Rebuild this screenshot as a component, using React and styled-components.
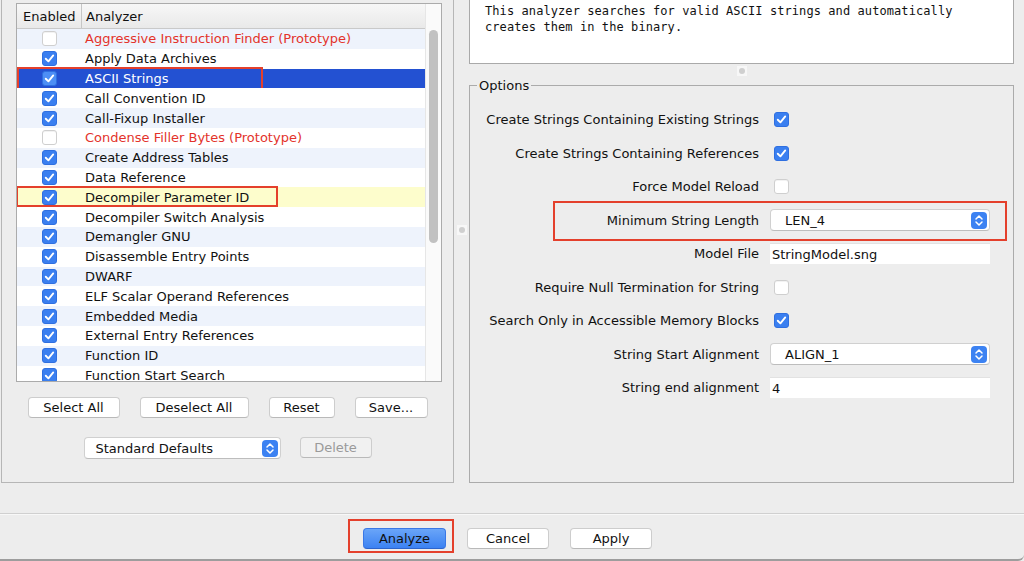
import React from 'react';
import styled, { createGlobalStyle } from 'styled-components';

const GlobalStyle = createGlobalStyle`
  html, body {
    margin: 0;
    padding: 0;
    background: #ededed;
  }
  body {
    font-family: "DejaVu Sans", "Liberation Sans", sans-serif;
    font-size: 13px;
    color: #111;
  }
`;

const analyzers = [
    { name: 'Aggressive Instruction Finder (Prototype)', on: false, proto: true },
    { name: 'Apply Data Archives', on: true },
    { name: 'ASCII Strings', on: true },
    { name: 'Call Convention ID', on: true },
    { name: 'Call-Fixup Installer', on: true },
    { name: 'Condense Filler Bytes (Prototype)', on: false, proto: true },
    { name: 'Create Address Tables', on: true },
    { name: 'Data Reference', on: true },
    { name: 'Decompiler Parameter ID', on: true },
    { name: 'Decompiler Switch Analysis', on: true },
    { name: 'Demangler GNU', on: true },
    { name: 'Disassemble Entry Points', on: true },
    { name: 'DWARF', on: true },
    { name: 'ELF Scalar Operand References', on: true },
    { name: 'Embedded Media', on: true },
    { name: 'External Entry References', on: true },
    { name: 'Function ID', on: true },
    { name: 'Function Start Search', on: true },
];

const SELECTED = 2;
const HOVERED = 8;

const Window = styled.div`
    width: 1024px;
    height: 561px;
    box-sizing: border-box;
    display: flex;
    flex-direction: column;
    background: #ededed;
    overflow: hidden;
    border-bottom: 2px solid #9d9d9d;
    border-bottom-right-radius: 6px;
`;

const Main = styled.div`
    display: flex;
    height: 514px;
    box-sizing: border-box;
    border-bottom: 1px solid #d0d0d0;
`;

const LeftPanel = styled.div`
    margin-left: 1px;
    width: 453px;
    height: 483px;
    box-sizing: border-box;
    padding-top: 3px;
    border: 1px solid #b6b6b6;
    border-top: none;
    display: flex;
    flex-direction: column;
`;

const ScrollPane = styled.div`
    margin-left: 14px;
    width: 426px;
    height: 379px;
    box-sizing: border-box;
    border: 1px solid #ababab;
    background: #fff;
    display: flex;
    overflow: hidden;
`;

const TableArea = styled.div`
    flex: 1;
    display: flex;
    flex-direction: column;
`;

const HeaderRow = styled.div`
    display: flex;
    height: 25px;
    flex-shrink: 0;
    align-items: center;
    background: linear-gradient(#f7f7f7, #e9e9e9);
    border-bottom: 1px solid #c9c9c9;
    box-sizing: border-box;
`;

const HeaderCell = styled.div`
    width: ${p => p.$w || 'auto'};
    flex: ${p => (p.$w ? 'none' : 1)};
    height: 100%;
    display: flex;
    align-items: center;
    padding-left: ${p => p.$pad}px;
    box-sizing: border-box;
    border-right: ${p => (p.$w ? '1px solid #c6c6c6' : 'none')};
    color: #111;
`;

const Row = styled.div`
    position: relative;
    display: flex;
    align-items: center;
    height: 19.8px;
    flex-shrink: 0;
    background: ${p =>
        p.$selected ? '#2351d2' : p.$hover ? '#fdfdcc' : p.$stripe ? '#eef3fc' : '#fff'};
    color: ${p => (p.$selected ? '#fff' : p.$proto ? '#e3332b' : '#111')};
`;

const CheckCell = styled.div`
    width: 64px;
    display: flex;
    justify-content: center;
`;

const NameCell = styled.div`
    padding-left: 4px;
    white-space: nowrap;
`;

const Callout = styled.div`
    position: absolute;
    left: ${p => p.$l}px;
    top: ${p => p.$t}px;
    width: ${p => p.$w}px;
    height: ${p => p.$h}px;
    box-sizing: border-box;
    border: 2px solid #e4402c;
    pointer-events: none;
`;

const ScrollTrack = styled.div`
    width: 16px;
    flex-shrink: 0;
    background: #fafafa;
    border-left: 1px solid #e6e6e6;
    box-sizing: border-box;
`;

const Thumb = styled.div`
    margin: 26px 0 0 3px;
    width: 9px;
    height: 213px;
    border-radius: 5px;
    background: #c1c1c1;
`;

const BoxWrap = styled.span`
    width: 15px;
    height: 15px;
    box-sizing: border-box;
    border-radius: 3px;
    display: inline-flex;
    align-items: center;
    justify-content: center;
    background: ${p => (p.$on ? (p.$light ? '#4d8ff5' : '#3a7ff0') : '#fff')};
    border: 1px solid ${p => (p.$on ? '#2f6fe0' : '#cfcfcf')};
    box-shadow: ${p => (p.$on ? 'none' : 'inset 0 1px 0 #f2f2f2')};
`;

const Checkbox = ({ on, light }) => (
    <BoxWrap $on={on} $light={light}>
        {on && (
            <svg width="11" height="11" viewBox="0 0 10 10">
                <path d="M1.6 5.2 L4 7.6 L8.4 2.2" fill="none" stroke="#fff" strokeWidth="1.7" strokeLinecap="round" strokeLinejoin="round" />
            </svg>
        )}
    </BoxWrap>
);

const ButtonRow = styled.div`
    display: flex;
    justify-content: center;
    gap: ${p => p.$gap}px;
    margin-top: ${p => p.$mt}px;
`;

const Button = styled.button`
    position: relative;
    width: ${p => p.$w}px;
    height: 21px;
    padding: 0;
    box-sizing: border-box;
    border-radius: 4px;
    border: 1px solid ${p => (p.$primary ? '#3a78e6' : '#cdcdcd')};
    border-bottom-color: ${p => (p.$primary ? '#2d64cc' : '#b9b9b9')};
    background: ${p =>
        p.$primary
            ? 'linear-gradient(#6aa5f8, #3c82f2)'
            : p.disabled
            ? '#f1f1f1'
            : '#fff'};
    color: ${p => (p.disabled ? '#9a9a9a' : '#111')};
    font-family: "DejaVu Sans", "Liberation Sans", sans-serif;
    font-size: 13px;
    display: flex;
    align-items: center;
    justify-content: center;
`;

const ComboBox = styled.div`
    width: ${p => p.$w}px;
    height: 22px;
    box-sizing: border-box;
    display: flex;
    align-items: center;
    justify-content: space-between;
    padding: 0 2px 0 ${p => p.$pad}px;
    background: #fff;
    border: 1px solid #d0d0d0;
    border-bottom-color: #bdbdbd;
    border-radius: 4px;
    color: #111;
`;

const Stepper = () => (
    <svg width="16" height="17" viewBox="0 0 16 17">
        <rect x="0" y="0" width="16" height="17" rx="4" fill="#3c82f2" />
        <path d="M5 7 L8 4 L11 7" fill="none" stroke="#fff" strokeWidth="1.5" strokeLinecap="round" strokeLinejoin="round" />
        <path d="M5 10 L8 13 L11 10" fill="none" stroke="#fff" strokeWidth="1.5" strokeLinecap="round" strokeLinejoin="round" />
    </svg>
);

const Combo = ({ w, pad, value }) => (
    <ComboBox $w={w} $pad={pad}>
        <span>{value}</span>
        <Stepper />
    </ComboBox>
);

const VDivider = styled.div`
    width: 15px;
    flex-shrink: 0;
    display: flex;
    justify-content: center;
    padding-top: 225px;
    box-sizing: border-box;
`;

const HDivider = styled.div`
    height: 14px;
    display: flex;
    align-items: center;
    justify-content: center;
`;

const Grip = styled.span`
    width: 10px;
    height: 10px;
    display: inline-flex;
    align-items: center;
    justify-content: center;
    background: #f7f7f7;
    &::after {
        content: '';
        width: 6px;
        height: 6px;
        border-radius: 50%;
        background: #cfcfcf;
    }
`;

const RightPanel = styled.div`
    width: 545px;
    display: flex;
    flex-direction: column;
`;

const DescBox = styled.div`
    height: 64px;
    box-sizing: border-box;
    background: #fff;
    border: 1px solid #a9a9a9;
    border-top: none;
    padding: 3px 15px 0;
    font-family: "DejaVu Sans Mono", "Liberation Mono", monospace;
    font-size: 12px;
    letter-spacing: 0.08px;
    line-height: 16px;
    color: #111;
    white-space: pre;
`;

const Group = styled.fieldset`
    margin: 0;
    padding: 10px 0 0 0;
    height: 405px;
    box-sizing: border-box;
    border: 1px solid #ababab;
    min-width: 0;
`;

const Legend = styled.legend`
    margin-left: 7px;
    padding: 0 2px;
    color: #111;
`;

const OptionRow = styled.div`
    position: relative;
    display: grid;
    grid-template-columns: 289px 220px;
    column-gap: 11px;
    align-items: center;
    height: 33.5px;
`;

const OptionLabel = styled.div`
    text-align: right;
    white-space: nowrap;
    color: #111;
`;

const CheckSlot = styled.div`
    padding-left: 4px;
    display: flex;
`;

const TextField = styled.div`
    height: 21px;
    box-sizing: border-box;
    background: #fff;
    border-top: 1px solid #e2e2e2;
    padding: 0 0 0 2px;
    display: flex;
    align-items: center;
    color: #111;
`;

const BottomBar = styled.div`
    flex: 1;
    display: flex;
    justify-content: center;
    align-items: flex-start;
    gap: 21px;
    padding: 13px 9px 0 0;
    box-sizing: border-box;
    border-top: 1px solid #f8f8f8;
`;

const options = [
    { label: 'Create Strings Containing Existing Strings', type: 'check', on: true },
    { label: 'Create Strings Containing References', type: 'check', on: true },
    { label: 'Force Model Reload', type: 'check', on: false },
    { label: 'Minimum String Length', type: 'combo', value: 'LEN_4', callout: true },
    { label: 'Model File', type: 'text', value: 'StringModel.sng' },
    { label: 'Require Null Termination for String', type: 'check', on: false },
    { label: 'Search Only in Accessible Memory Blocks', type: 'check', on: true },
    { label: 'String Start Alignment', type: 'combo', value: 'ALIGN_1' },
    { label: 'String end alignment', type: 'text', value: '4' },
];

const OptionControl = ({ opt }) => {
    if (opt.type === 'check') {
        return (
            <CheckSlot>
                <Checkbox on={opt.on} />
            </CheckSlot>
        );
    }
    if (opt.type === 'combo') {
        return <Combo w={220} pad={14} value={opt.value} />;
    }
    return <TextField>{opt.value}</TextField>;
};

const App = () => {
    return (
        <>
            <GlobalStyle />
            <Window>
                <Main>
                    <LeftPanel>
                        <ScrollPane>
                            <TableArea>
                                <HeaderRow>
                                    <HeaderCell $w="65px" $pad={6}>Enabled</HeaderCell>
                                    <HeaderCell $pad={4}>Analyzer</HeaderCell>
                                </HeaderRow>
                                {analyzers.map((a, i) => (
                                    <Row
                                        key={a.name}
                                        $stripe={i % 2 === 0}
                                        $selected={i === SELECTED}
                                        $hover={i === HOVERED}
                                        $proto={a.proto}
                                    >
                                        <CheckCell>
                                            <Checkbox on={a.on} light={i === SELECTED} />
                                        </CheckCell>
                                        <NameCell>{a.name}</NameCell>
                                        {i === SELECTED && <Callout $l={0} $t={-2} $w={246} $h={24} />}
                                        {i === HOVERED && <Callout $l={-1} $t={-1} $w={262} $h={21} />}
                                    </Row>
                                ))}
                            </TableArea>
                            <ScrollTrack>
                                <Thumb />
                            </ScrollTrack>
                        </ScrollPane>
                        <ButtonRow $gap={20} $mt={15}>
                            <Button $w={92}>Select All</Button>
                            <Button $w={109}>Deselect All</Button>
                            <Button $w={66}>Reset</Button>
                            <Button $w={73}>Save...</Button>
                        </ButtonRow>
                        <ButtonRow $gap={19} $mt={19}>
                            <Combo w={197} pad={11} value="Standard Defaults" />
                            <Button $w={72} disabled>Delete</Button>
                        </ButtonRow>
                    </LeftPanel>
                    <VDivider>
                        <Grip />
                    </VDivider>
                    <RightPanel>
                        <DescBox>
                            {'This analyzer searches for valid ASCII strings and automatically\ncreates them in the binary.'}
                        </DescBox>
                        <HDivider>
                            <Grip />
                        </HDivider>
                        <Group>
                            <Legend>Options</Legend>
                            {options.map(opt => (
                                <OptionRow key={opt.label}>
                                    <OptionLabel>{opt.label}</OptionLabel>
                                    <OptionControl opt={opt} />
                                    {opt.callout && <Callout $l={83} $t={-3} $w={454} $h={40} />}
                                </OptionRow>
                            ))}
                        </Group>
                    </RightPanel>
                </Main>
                <BottomBar>
                    <Button $w={83} $primary>
                        Analyze
                        <Callout $l={-16} $t={-10} $w={106} $h={34} />
                    </Button>
                    <Button $w={82}>Cancel</Button>
                    <Button $w={82}>Apply</Button>
                </BottomBar>
            </Window>
        </>
    );
};

export default App;
